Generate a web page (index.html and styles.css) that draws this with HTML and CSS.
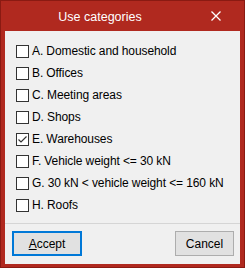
FILE: index.html
```html
<!DOCTYPE html>
<html lang="en">
<head>
    <meta charset="UTF-8">
    <title>Use categories</title>
    <link rel="stylesheet" href="styles.css">
</head>
<body>
    <div class="window">
        <div class="titlebar">
            <div class="title">Use categories</div>
            <button class="close-btn">
                <svg width="10" height="10" viewBox="0 0 10 10">
                    <path d="M0.5 0.5 L9.5 9.5 M9.5 0.5 L0.5 9.5" stroke="#fff" stroke-width="1.3"/>
                </svg>
            </button>
        </div>
        <div class="client">
            <ul class="category-list">
                <li><span class="check"></span>A. Domestic and household</li>
                <li><span class="check"></span>B. Offices</li>
                <li><span class="check"></span>C. Meeting areas</li>
                <li><span class="check"></span>D. Shops</li>
                <li>
                    <span class="check">
                        <svg width="11" height="11" viewBox="0 0 11 11">
                            <path d="M1.5 5.5 L4 8 L9.5 2.5" fill="none" stroke="#333" stroke-width="1.2"/>
                        </svg>
                    </span>E. Warehouses
                </li>
                <li><span class="check"></span>F. Vehicle weight &lt;= 30 kN</li>
                <li><span class="check"></span>G. 30 kN &lt; vehicle weight &lt;= 160 kN</li>
                <li><span class="check"></span>H. Roofs</li>
            </ul>
            <div class="footer">
                <button class="btn btn-default"><u>A</u>ccept</button>
                <button class="btn">Cancel</button>
            </div>
        </div>
    </div>
</body>
</html>
```

FILE: styles.css
```css
* {
    margin: 0;
    padding: 0;
    box-sizing: border-box;
}

body {
    font-family: "Liberation Sans", Arial, sans-serif;
    font-size: 12px;
    color: #000;
    background: #fff;
}

.window {
    width: 245px;
    height: 268px;
    background: #b0291f;
    border: 1px solid #8a1a12;
    display: flex;
    flex-direction: column;
}

.titlebar {
    height: 30px;
    display: flex;
    align-items: center;
}

.title {
    width: 198px;
    text-align: center;
    color: #fff;
    font-size: 12.5px;
    padding-top: 1px;
}

.close-btn {
    background: none;
    border: none;
    width: 34px;
    height: 30px;
    display: flex;
    align-items: center;
    justify-content: center;
}

.client {
    flex: 1;
    margin: 0 4px 3px 4px;
    background: #f0f0f0;
    display: flex;
    flex-direction: column;
}

.category-list {
    list-style: none;
    padding: 9px 0 0 11px;
    flex: 1;
}

.category-list li {
    height: 22px;
    display: flex;
    align-items: center;
    letter-spacing: -0.1px;
}

.check {
    width: 13px;
    height: 13px;
    border: 1px solid #333;
    background: #fff;
    margin-right: 3px;
    display: flex;
    align-items: center;
    justify-content: center;
}

.footer {
    border-top: 1px solid #d5d5d5;
    height: 41px;
    display: flex;
    justify-content: space-between;
    align-items: flex-start;
    padding: 7px 6px 0 7px;
}

.btn {
    font-family: inherit;
    font-size: 12px;
    color: #000;
    background: #e1e1e1;
    border: 1px solid #adadad;
    width: 59px;
    height: 25px;
}

.btn-default {
    width: 70px;
    border: 2px solid #0078d7;
}
```
